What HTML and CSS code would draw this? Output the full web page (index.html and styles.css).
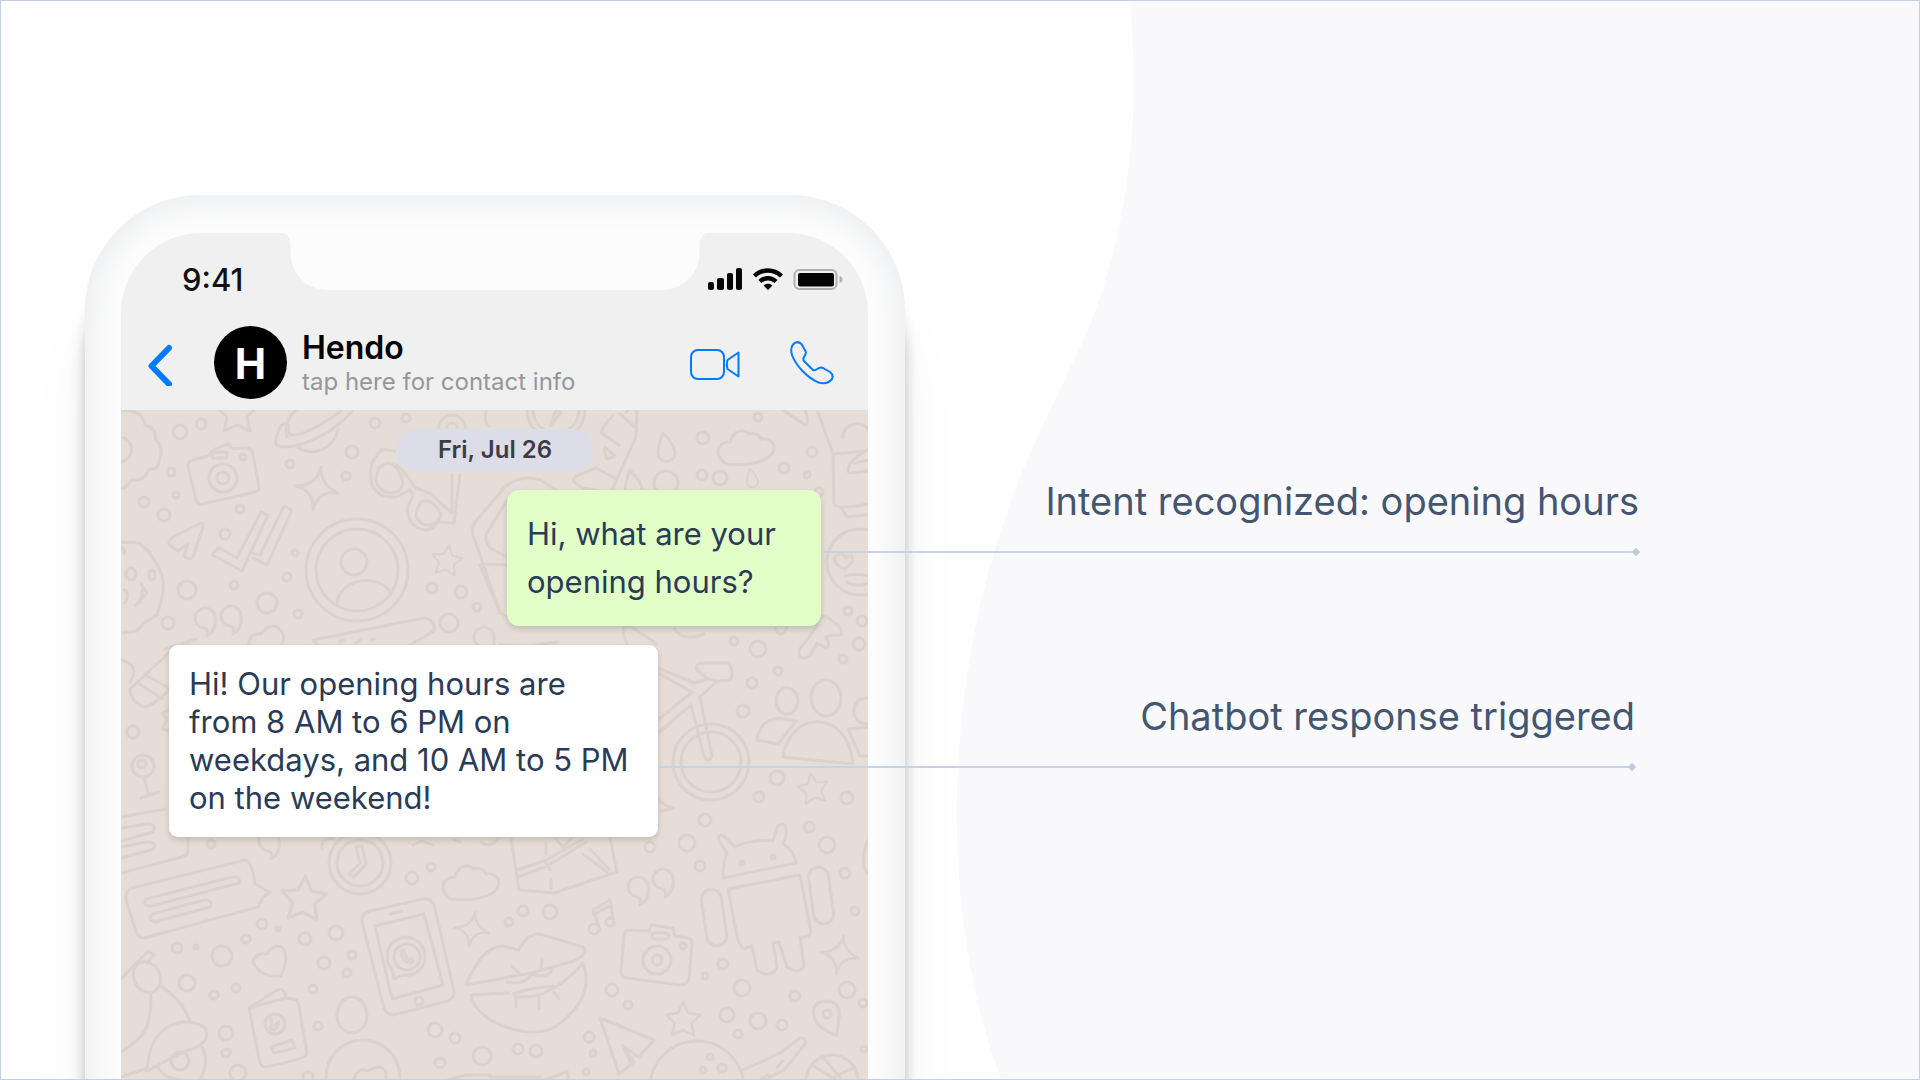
FILE: index.html
```html
<!DOCTYPE html>
<html lang="en">
<head>
    <meta charset="UTF-8">
    <meta name="viewport" content="width=device-width, initial-scale=1.0">
    <title>Hendo Chatbot</title>
    <link rel="stylesheet" href="styles.css">
</head>
<body>
<main class="stage">
    <svg class="backdrop" viewBox="0 0 1920 1080" preserveAspectRatio="none" aria-hidden="true">
        <path d="M1130 0C1140 110 1132 215 1090 325C1062 390 1020 460 992 560C945 725 942 920 1001 1080H1920V0Z" fill="#f9f9fc"/>
    </svg>

    <section class="phone">
        <div class="screen">
            <svg class="notch" viewBox="0 0 425 57" aria-hidden="true">
                <path d="M0 0C6 1 8 7 8 13V19C8 41 24 57 46 57H379C401 57 417 41 417 19V13C417 7 419 1 425 0Z"/>
            </svg>

            <div class="status-bar">
                <span class="time">9:41</span>
                <svg class="status-icons" viewBox="0 0 138 26" aria-hidden="true">
                    <rect x="1" y="16" width="6" height="8" rx="2"/>
                    <rect x="10" y="12" width="7" height="12" rx="2"/>
                    <rect x="20" y="7" width="6" height="17" rx="2"/>
                    <rect x="29" y="2" width="6" height="22" rx="2"/>
                    <path d="M46 8.500C54 0 68 0 76 8.500L73 11.500C66 5 56 5 49 11.500Z"/>
                    <path d="M51.500 14C57 8.500 65 8.500 70.500 14L67.500 17C64 13.500 58 13.500 54.500 17Z"/>
                    <path d="M56.500 19.500C59 17 63 17 65.500 19.500L61 24Z"/>
                    <rect x="87.500" y="4" width="42" height="19" rx="5" fill="none" stroke="#b0b0b0" stroke-width="2"/>
                    <rect x="91" y="7" width="36" height="13.500" rx="2"/>
                    <path d="M132.500 10C136.500 11 136.500 16 132.500 17Z" fill="#b0b0b0"/>
                </svg>
            </div>

            <header class="chat-header">
                <button class="icon-btn back" type="button" aria-label="Back">
                    <svg width="26" height="46" viewBox="0 0 26 46"><path d="M22 8L4.500 26L22 44" stroke-width="6"/></svg>
                </button>
                <div class="avatar">H</div>
                <div class="contact">
                    <h1 class="name">Hendo</h1>
                    <p class="hint">tap here for contact info</p>
                </div>
                <button class="icon-btn" type="button" aria-label="Video call">
                    <svg width="50" height="44" viewBox="0 0 50 44">
                        <rect x="1" y="9" width="33" height="29" rx="7" stroke-width="2"/>
                        <path d="M37.500 19L48.500 11.500V35.500L37.500 28Q36 23.500 37.500 19Z" stroke-width="2"/>
                    </svg>
                </button>
                <button class="icon-btn" type="button" aria-label="Voice call">
                    <svg width="44" height="44" viewBox="0 0 44 44">
                        <path d="M3 3.500Q7-1 11.500 3L16 11Q16 13 13.500 17Q13 18.500 14 20L23 29Q25 30 29 27Q31 26 33 27L40 31Q44 34 42 38Q37 44 28.500 41.500C18 37 6 25 2 14Q0 7 3 3.500Z" stroke-width="2"/>
                    </svg>
                </button>
            </header>

            <div class="chat">
                <svg class="wallpaper" viewBox="121 410 747 670" preserveAspectRatio="xMidYMin slice" aria-hidden="true">
                    <defs>
                        <path id="star" d="M0-20L6-7L20-5L10 5L13 19L0 13L-13 19L-10 5L-20-5L-6-7Z"/>
                        <path id="sparkle" d="M4-21Q3-4 21 5Q1 2-4 22Q-3 2-22-2Q0-2 4-21Z"/>
                        <path id="quote" d="M8-2A10 10 0 1 0-3 9Q2 10 0 17Q10 11 8-2Z"/>
                        <path id="drop" d="M-3-14Q9-2 9 6A8 8 0 0 1-8 6Q-8-1-3-14Z"/>
                        <path id="cloud" d="M-19 17C-32 8-28-5-15-5C-11-18-2-18 4-13Q12-16 16-8C30-10 34 5 21 12Q5 20-19 17Z"/>
                    </defs>
                    <!-- small dots -->
                    <g>
                        <circle cx="180" cy="432" r="7"/><circle cx="201" cy="424" r="5"/><circle cx="375" cy="423" r="5"/>
                        <circle cx="406" cy="418" r="4"/><circle cx="352" cy="452" r="6"/><circle cx="290" cy="464" r="4"/>
                        <circle cx="346" cy="476" r="4"/><circle cx="171" cy="472" r="4"/><circle cx="176" cy="495" r="3"/>
                        <circle cx="144" cy="502" r="5"/><circle cx="164" cy="515" r="6"/><circle cx="240" cy="509" r="4"/>
                        <circle cx="225" cy="534" r="5"/><circle cx="295" cy="553" r="3"/><circle cx="287" cy="577" r="4"/>
                        <circle cx="234" cy="585" r="4"/><circle cx="187" cy="590" r="9"/><circle cx="267" cy="603" r="10"/>
                        <circle cx="298" cy="614" r="4"/><circle cx="168" cy="623" r="6"/><circle cx="432" cy="588" r="5"/>
                        <circle cx="461" cy="592" r="6"/><circle cx="477" cy="607" r="4"/><circle cx="449" cy="623" r="9"/>
                        <circle cx="703" cy="438" r="6"/><circle cx="758" cy="417" r="4"/><circle cx="812" cy="452" r="5"/>
                        <circle cx="784" cy="468" r="5"/><circle cx="807" cy="475" r="3"/><circle cx="702" cy="475" r="5"/>
                        <circle cx="720" cy="478" r="7"/><circle cx="666" cy="483" r="12"/><circle cx="819" cy="492" r="4"/>
                        <circle cx="848" cy="611" r="4"/><circle cx="862" cy="621" r="5"/><circle cx="859" cy="644" r="6"/>
                        <circle cx="734" cy="641" r="4"/><circle cx="758" cy="649" r="8"/><circle cx="778" cy="671" r="4"/>
                        <circle cx="752" cy="683" r="5"/><circle cx="743" cy="711" r="6"/><circle cx="843" cy="659" r="4"/>
                        <circle cx="777" cy="778" r="7"/><circle cx="759" cy="797" r="5"/><circle cx="847" cy="798" r="6"/>
                        <circle cx="705" cy="820" r="6"/><circle cx="687" cy="843" r="8"/><circle cx="650" cy="847" r="5"/>
                        <circle cx="809" cy="827" r="5"/><circle cx="827" cy="845" r="8"/><circle cx="133" cy="732" r="6"/>
                        <circle cx="211" cy="844" r="4"/><circle cx="412" cy="878" r="6"/><circle cx="431" cy="867" r="4"/>
                        <circle cx="262" cy="924" r="5"/><circle cx="278" cy="929" r="2"/><circle cx="246" cy="939" r="4"/>
                        <circle cx="305" cy="939" r="6"/><circle cx="336" cy="933" r="7"/><circle cx="352" cy="955" r="4"/>
                        <circle cx="324" cy="963" r="6"/><circle cx="347" cy="973" r="4"/><circle cx="313" cy="989" r="4"/>
                        <circle cx="318" cy="1026" r="4"/><circle cx="177" cy="948" r="5"/><circle cx="196" cy="947" r="2"/>
                        <circle cx="222" cy="956" r="10"/><circle cx="187" cy="983" r="8"/><circle cx="214" cy="995" r="4"/>
                        <circle cx="236" cy="988" r="4"/><circle cx="226" cy="1033" r="7"/><circle cx="226" cy="1053" r="4"/>
                        <circle cx="238" cy="1073" r="8"/><circle cx="435" cy="1030" r="7"/><circle cx="455" cy="1038" r="5"/>
                        <circle cx="482" cy="1056" r="9"/><circle cx="440" cy="1063" r="5"/><circle cx="308" cy="1077" r="5"/>
                        <circle cx="700" cy="866" r="5"/><circle cx="523" cy="911" r="5"/><circle cx="550" cy="912" r="7"/>
                        <circle cx="509" cy="922" r="4"/><circle cx="612" cy="990" r="6"/><circle cx="628" cy="1005" r="4"/>
                        <circle cx="723" cy="964" r="5"/><circle cx="705" cy="976" r="3"/><circle cx="742" cy="988" r="8"/>
                        <circle cx="795" cy="996" r="5"/><circle cx="727" cy="1015" r="7"/><circle cx="758" cy="1021" r="8"/>
                        <circle cx="782" cy="1025" r="5"/><circle cx="738" cy="1034" r="4"/><circle cx="847" cy="990" r="8"/>
                        <circle cx="863" cy="1003" r="4"/><circle cx="855" cy="911" r="4"/><circle cx="845" cy="873" r="5"/>
                        <circle cx="589" cy="1037" r="5"/><circle cx="593" cy="1053" r="3"/><circle cx="536" cy="1051" r="6"/>
                        <circle cx="518" cy="1049" r="5"/><circle cx="586" cy="1072" r="3"/><circle cx="864" cy="1049" r="3"/>
                    </g>
                    <use href="#star" x="237" y="412"/>
                    <use href="#star" transform="translate(447 560) rotate(8) scale(.75)"/>
                    <use href="#star" transform="translate(813 788) rotate(-10) scale(.75)"/>
                    <use href="#star" transform="translate(304 898) rotate(4) scale(1.100)"/>
                    <use href="#star" transform="translate(683 1019) scale(.85)"/>
                    <use href="#sparkle" x="317" y="488"/>
                    <use href="#sparkle" transform="translate(472 929) scale(.8)"/>
                    <use href="#sparkle" transform="translate(840 954) scale(.9)"/>
                    <use href="#quote" x="207" y="619"/><use href="#quote" x="233" y="617"/>
                    <use href="#quote" x="640" y="888"/><use href="#quote" x="665" y="880"/>
                    <use href="#quote" x="271" y="842"/><use href="#quote" x="486" y="638"/>
                    <use href="#drop" x="666" y="447"/><use href="#drop" x="633" y="484"/>
                    <use href="#drop" transform="translate(752 478) scale(.65)"/>
                    <use href="#cloud" x="745" y="447"/><use href="#cloud" x="470" y="882"/>

                    <!-- planet, flower, camera -->
                    <path d="M289 427C282 413 274 442 276 444C280 452 324 444 352 411M289 427C284 445 315 430 341 411M287 437A27 27 0 0 1 296 410M298 448A27 27 0 0 0 338 430"/>
                    <path d="M121 411Q142 408 145 425Q157 428 155 439Q165 448 159 460Q160 470 149 469Q145 482 131 480Q126 490 119 488M119 437A12 12 0 0 1 119 462"/>
                    <path d="M193 460L208 456L213 450L228 444L233 449L246 448Q252 448 253 454L259 487Q259 491 255 492L203 504Q198 505 196 500L188 467Q187 462 193 460Z"/>
                    <circle cx="223" cy="478" r="14"/><circle cx="223" cy="478" r="6"/>
                    <rect x="212" y="452" width="15" height="6" rx="2"/><circle cx="243" cy="457" r="3"/>

                    <!-- paper plane, ticks, profile -->
                    <path d="M173 537L199 524Q204 522 203 527L193 557Q190 561 184 556L188 544L178 551L169 545Q168 540 173 537Z"/>
                    <path d="M213 553L219 548L237 558L261 512L268 515L242 571L213 555ZM252 553L260 555L284 506L292 510L267 565L253 558"/>
                    <circle cx="357" cy="570" r="51"/><circle cx="357" cy="570" r="41"/><circle cx="354" cy="562" r="13"/>
                    <path d="M337 602C342 577 379 574 390 592"/>

                    <!-- sunglasses -->
                    <path d="M372 462C367 484 374 499 397 497L409 490Q416 493 408 506C404 528 429 538 438 522L454 523L460 475M372 462L382 449L405 453M397 465Q407 474 415 488L430 493L452 513L452 475M379 468Q391 457 399 472C408 489 398 495 386 492Q371 486 379 468ZM421 502Q432 497 441 514Q439 526 425 525Q410 519 421 502Z"/>

                    <!-- cookie face -->
                    <path d="M121 542L139 543L151 555L158 566Q166 580 162 597L157 615L144 623L137 631L121 633M139 543L150 552M121 547Q126 549 124 554"/>
                    <ellipse cx="131" cy="574" rx="5" ry="6"/><ellipse cx="152" cy="575" rx="3" ry="5"/>
                    <path d="M124 590Q131 592 125 603M141 584L147 593L135 606M143 588L140 602"/>

                    <!-- heart, keyboard, tube -->
                    <path d="M249 650Q247 632 261 634Q273 619 282 632Q287 642 276 652"/>
                    <path d="M313 640L424 618Q436 620 434 631L410 645M320 649L314 641M340 644Q338 640 344 640M356 643L360 640M371 640L375 639"/>
                    <path d="M172 650L130 689Q130 701 144 707Q152 707 169 690M137 682L162 699M144 674L172 690M165 649L197 639"/>
                    <path d="M121 660Q141 665 130 682"/>
                    <circle cx="143" cy="766" r="11"/><circle cx="142" cy="764" r="4"/>
                    <path d="M144 777L149 796M141 798L159 792M172 708L162 713L167 719L162 729L172 731"/>

                    <!-- rocket and clock -->
                    <path d="M626 412Q637 401 637 411L636 437L612 490M613 416Q603 425 601 433M620 414L636 428M601 433L619 445M596 468L617 479M605 447L615 456L607 459Q604 454 605 447M576 476Q569 481 583 488L601 491M596 468L576 476"/>
                    <circle cx="556" cy="410" r="29"/><circle cx="556" cy="410" r="23"/><path d="M550 426L556 410L561 412Z"/>
                    <circle cx="452" cy="428" r="13"/><circle cx="452" cy="428" r="5"/><path d="M486 412Q484 424 489 426"/>
                    <path d="M501 490Q519 473 541 480L556 490M480 565L500 613L507 617"/>
                    <path d="M507 485L475 522Q471 528 473 535L500 613M507 500L488 531Q482 542 492 549L507 557M482 564L507 565"/>

                    <!-- book and tag on the right -->
                    <path d="M783 410L805 425Q810 422 805 410M818 412L833 454L868 451M833 454L834 504Q836 510 868 504M841 508L847 517L868 515M843 438C842 420 868 421 868 431M849 473Q844 462 868 450M852 473L868 471M854 463L868 460"/>
                    <circle cx="860" cy="562" r="33"/>
                    <path d="M834 558Q842 550 846 558Q854 552 852 562L845 569Q836 567 834 558ZM845 576Q854 573 868 576M847 582Q857 588 868 583"/>
                    <path d="M817 626Q807 640 799 650Q799 662 810 656L817 643L826 648Q832 643 825 638L831 635Q847 638 839 626L827 617Q819 614 817 626Z"/>
                    <path d="M500 645L529 646L558 642M628 646Q616 621 633 628L657 644M674 628Q683 643 704 634M775 628Q781 641 787 627"/>
                    <!-- bicycle -->
                    <circle cx="711" cy="762" r="38"/><circle cx="711" cy="762" r="30"/>
                    <path d="M658 668L694 683L708 679L697 670Q695 663 703 663L729 663Q735 675 730 680L717 681L700 697L712 756Q708 764 704 756L691 705L658 733M658 673L692 692L658 720M717 681L708 679"/>
                    <path d="M658 800L667 806L674 808L661 811"/>
                    <!-- people -->
                    <ellipse cx="826" cy="698" rx="15" ry="18"/><ellipse cx="787" cy="701" rx="11" ry="13"/><ellipse cx="866" cy="711" rx="12" ry="13"/>
                    <path d="M783 757C789 711 848 707 853 764ZM778 744L757 740Q761 711 796 721ZM848 729L860 756H868M848 729L868 727"/>

                    <!-- message cards -->
                    <path d="M121 817L165 809M121 828L148 824Q156 824 153 832L121 841M121 847L146 842Q157 841 154 849L121 858M188 837L188 850Q189 854 182 857L121 873"/>
                    <path d="M132 888L245 860Q252 860 255 884L270 892L263 897L258 907L148 937Q139 940 136 932L126 900Q126 890 132 888Z"/>
                    <path d="M146 899L232 877Q241 876 239 883L151 906Q142 906 146 899ZM152 914L204 900Q213 900 210 907L155 922Q147 920 152 914Z"/>
                    <circle cx="360" cy="863" r="31"/><circle cx="360" cy="863" r="23"/>
                    <path d="M356 847L362 846L366 864L354 877L349 874L360 863ZM322 849Q321 836 334 839M413 845L422 841L433 845M454 840L460 842M481 842Q490 850 499 837"/>

                    <!-- phone -->
                    <path d="M370 911L423 899Q431 898 434 905L454 991Q455 998 448 1001L393 1015Q387 1015 384 1008L362 922Q361 914 370 911Z"/>
                    <path d="M375 926L424 914L443 985L392 999ZM390 914L402 911"/><circle cx="419" cy="1001" r="4"/>
                    <path d="M394 979L392 969A19 19 0 1 1 403 975Z"/><circle cx="407" cy="957" r="13"/><path d="M401 951Q402 965 413 962L412 958L408 960L403 950Z"/>

                    <!-- heart, passport, bell -->
                    <path d="M253 962Q255 952 267 954Q273 944 282 947Q290 956 281 976Q260 978 253 962Z"/>
                    <path d="M249 1008L277 990Q284 987 286 998L293 999Q298 999 299 1006L307 1054Q306 1059 265 1067Q261 1067 259 1059ZM249 1008L286 998M271 1047L292 1040L295 1048L274 1053Z"/>
                    <circle cx="275" cy="1024" r="10"/><path d="M271 1018L272 1027L279 1022Q275 1035 270 1027"/>
                    <ellipse cx="352" cy="1015" rx="15" ry="18"/>
                    <circle cx="363" cy="1077" r="37"/><path d="M354 1080Q357 1066 368 1071Q381 1063 386 1072V1080"/>
                    <path d="M121 979L148 951L154 955L147 963"/>
                    <ellipse cx="147" cy="977" rx="13" ry="16" transform="rotate(-25 147 977)"/>
                    <path d="M151 994C151 1030 144 1037 121 1052M161 986Q184 1002 190 1022M147 1071C149 1020 189 1015 205 1028Q213 1044 185 1051L147 1071M121 1077L147 1068M158 1068Q166 1080 185 1080M202 1047Q210 1061 200 1080"/>
                    <circle cx="180" cy="1061" r="9"/>

                    <!-- lips -->
                    <path d="M466 985Q481 948 502 946L519 950Q526 934 540 934L583 947Q590 953 574 961L531 973L466 985ZM471 995L508 993M552 989Q569 980 583 963Q596 998 555 1027C531 1041 476 1024 471 995M507 982Q524 986 532 974Q549 980 554 967M513 994L530 989L553 986Q545 998 516 997ZM512 966L519 973M542 959L541 967M516 999V1007M539 998V1008M554 992L559 999"/>

                    <!-- parcel, music, camera -->
                    <path d="M511 838L519 890L554 893L617 872L610 838M518 877L547 866L586 842M518 870L546 860L583 839M545 862L550 870M583 854L607 872M590 849L609 869M555 838L563 847L572 838M546 843V854M551 879V888"/>
                    <path d="M600 930L593 910L610 900L614 924M593 915L610 906"/><circle cx="594" cy="929" r="5"/><circle cx="610" cy="922" r="4"/>
                    <path d="M629 930L649 931L651 925L673 928L675 936L688 938Q693 939 692 944L689 978Q687 986 680 985L627 978Q620 977 621 970L624 936Q624 931 629 930Z"/>
                    <circle cx="657" cy="960" r="14"/><circle cx="657" cy="960" r="5"/><circle cx="683" cy="946" r="3"/><rect x="652" y="933" width="17" height="6" rx="3"/>

                    <!-- robot -->
                    <path d="M723 878Q722 868 727 853L719 841Q717 833 724 836L735 847Q751 839 773 841L778 826Q788 820 786 836L783 844Q794 850 796 863Z"/>
                    <path d="M728 889L800 875L811 932Q809 938 800 937L804 966Q799 975 787 967L779 942L773 943L777 967Q770 980 757 970L752 946L744 949Q739 946 737 936Z"/>
                    <rect x="704" y="889" width="20" height="57" rx="10" transform="rotate(-8 714 917)"/><rect x="811" y="867" width="20" height="57" rx="10" transform="rotate(-8 821 895)"/>
                    <circle cx="742" cy="863" r="2"/><circle cx="773" cy="857" r="2"/>

                    <!-- plane, moon, pin, carrot, ball -->
                    <path d="M600 1018L654 1040L639 1057L623 1046L634 1062L619 1074ZM623 1046L630 1061"/>
                    <circle cx="697" cy="1088" r="47"/><circle cx="710" cy="1057" r="3"/><circle cx="722" cy="1068" r="4"/><circle cx="703" cy="1070" r="3"/>
                    <path d="M816 1022Q808 1002 826 1001Q841 1001 839 1017L837 1035Q824 1032 816 1022Z"/><circle cx="827" cy="1014" r="4"/>
                    <path d="M741 1071L780 1053L800 1038Q810 1038 802 1048L784 1070L764 1080M761 1079L768 1075M777 1067L783 1061"/>
                    <circle cx="832" cy="1081" r="26"/><path d="M812 1065L836 1080M822 1056L842 1080M855 1067L832 1078"/>
                    <path d="M868 840Q862 852 864 868L868 873M490 1077H540M543 1080L557 1076L567 1071L569 1080M447 1080L466 1075H490"/>
                </svg>

                <div class="date">Fri, Jul 26</div>
                <div class="message sent">Hi, what are your opening hours?</div>
                <div class="message received">Hi! Our opening hours are from 8 AM to 6 PM on weekdays, and 10 AM to 5 PM on the weekend!</div>
            </div>
        </div>
    </section>

    <aside class="callouts">
        <div class="callout intent">Intent recognized: opening hours</div>
        <div class="callout response">Chatbot response triggered</div>
    </aside>
</main>
</body>
</html>
```

FILE: styles.css
```css
* {
    box-sizing: border-box;
}

body {
    margin: 0;
    font-family: Inter, "Liberation Sans", sans-serif;
    background-color: #fff;
}

h1, p {
    margin: 0;
}

.stage {
    position: relative;
    display: grid;
    grid-template-columns: 820px 734px;
    height: 100vh;
    padding: 194px 0 0 84px;
    border: 1px solid #c6cfe0;
    overflow: hidden;
}

.backdrop {
    position: absolute;
    inset: 0;
    width: 100%;
    height: 100%;
}

/* phone */
.phone {
    position: relative;
    display: flex;
    height: 1500px;
    padding: 38px 37px 0 36px;
    border-radius: 115px;
    background-color: #fcfcfc;
    box-shadow: inset 0 0 36px #e3e7eb, 0 50px 16px -2px rgba(0, 0, 0, 0.32), 0 80px 70px rgba(0, 0, 0, 0.04);
}

.screen {
    position: relative;
    flex: 1;
    display: flex;
    flex-direction: column;
    border-radius: 80px 80px 0 0;
    background-color: #f0f0f0;
    overflow: hidden;
}

.notch {
    position: absolute;
    top: 0;
    left: 50%;
    width: 425px;
    height: 57px;
    transform: translateX(-50%);
    fill: #fcfcfc;
}

.status-bar {
    display: flex;
    align-items: center;
    justify-content: space-between;
    height: 92px;
    padding: 0 23px 0 61px;
}

.time {
    font-size: 31px;
    font-weight: 500;
    color: #111;
}

.status-icons {
    width: 138px;
    height: 26px;
    fill: #050505;
}

.chat-header {
    display: flex;
    align-items: center;
    height: 85px;
    padding: 0 34px 10px 26px;
}

.icon-btn {
    display: flex;
    margin-left: 50px;
    padding: 0;
    border: none;
    background: none;
    cursor: pointer;
}

.icon-btn.back {
    margin: 0 41px 0 0;
}

.icon-btn svg {
    fill: none;
    stroke: #007aff;
    stroke-linecap: round;
    stroke-linejoin: round;
}

.avatar {
    width: 73px;
    height: 73px;
    border-radius: 50%;
    background-color: #000;
    color: #fff;
    font-size: 42px;
    font-weight: 700;
    line-height: 75px;
    text-align: center;
}

.contact {
    flex: 1;
    padding-left: 15px;
    white-space: nowrap;
}

.name {
    font-size: 32px;
    font-weight: 600;
    line-height: 38px;
}

.hint {
    font-size: 24px;
    line-height: 30px;
    color: #96969b;
}

/* conversation */
.chat {
    position: relative;
    flex: 1;
    display: flex;
    flex-direction: column;
    gap: 19px;
    padding: 19px 47px 0 48px;
    background-color: #e5ddd6;
}

.wallpaper {
    position: absolute;
    top: 0;
    left: 0;
    width: 100%;
    fill: none;
    stroke: #dbd2cb;
    stroke-width: 3;
    stroke-linejoin: round;
    stroke-linecap: round;
}

.date {
    position: relative;
    align-self: center;
    padding: 0 42px;
    border-radius: 20px;
    background-color: #dddde9;
    color: #3c3c43;
    font-size: 24px;
    font-weight: 600;
    line-height: 42px;
}

.message {
    position: relative;
    padding: 20px;
    border-radius: 12px;
    box-shadow: 0 3px 6px rgba(0, 0, 0, 0.15);
    color: #2a3b56;
    font-size: 31px;
}

.sent {
    align-self: flex-end;
    width: 314px;
    background-color: #e1ffc7;
    line-height: 48px;
}

.received {
    width: 489px;
    border-radius: 9px;
    background-color: #fff;
    line-height: 38px;
}

/* callouts */
.callouts {
    position: relative;
    padding-top: 276px;
}

.callout {
    position: relative;
    height: 82px;
    color: #44566f;
    font-size: 38px;
    line-height: 61px;
    text-align: right;
    white-space: nowrap;
}

.callout::before {
    content: "";
    position: absolute;
    right: 3px;
    bottom: 0;
    left: -82px;
    height: 2px;
    background-color: #c8d2e3;
}

.callout::after {
    content: "";
    position: absolute;
    right: 0;
    bottom: -2px;
    width: 6px;
    height: 6px;
    background-color: #c1cbdf;
    transform: rotate(45deg);
}

.response {
    margin: 133px 4px 0 0;
}

.response::before {
    left: -247px;
}
```
